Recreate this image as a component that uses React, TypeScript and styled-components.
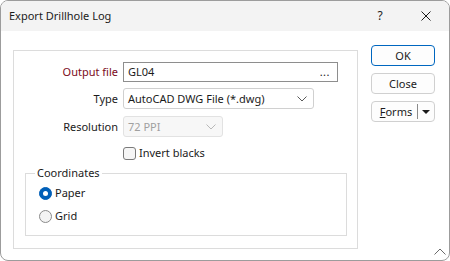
import React from 'react'
import styled, { createGlobalStyle } from 'styled-components'

const GlobalStyle = createGlobalStyle`
  html, body {
    margin: 0;
    padding: 0;
    background: #ffffff;
  }
  * {
    box-sizing: border-box;
  }
`

const Window = styled.div`
  position: relative;
  width: 450px;
  height: 261px;
  border: 1px solid #9c9c9c;
  border-radius: 8px;
  overflow: hidden;
  background: #ffffff;
  font-family: "Segoe UI", "Noto Sans", sans-serif;
  font-size: 11px;
  line-height: 16px;
  color: #1b1b1b;
`

const TitleBar = styled.div`
  height: 30px;
  background: #f3f3f3;
  display: flex;
  align-items: center;
  padding-left: 8px;
`

const Title = styled.div`
  flex: 1;
  font-size: 11px;
`

const TitleButton = styled.div`
  width: 46px;
  height: 30px;
  display: flex;
  align-items: center;
  justify-content: center;
  font-size: 12px;
`

const Body = styled.div`
  display: flex;
  align-items: flex-start;
  padding: 14px 0 0 12px;
  gap: 13px;
`

const Panel = styled.div`
  margin-top: 5px;
  width: 345px;
  height: 199px;
  border: 1px solid #dcdcdc;
  padding-top: 11px;
`

const Row = styled.div<{ $gap?: number }>`
  display: flex;
  align-items: center;
  margin-top: ${p => p.$gap ?? 0}px;
`

const Label = styled.div<{ $required?: boolean }>`
  width: 109px;
  text-align: right;
  padding-right: 5px;
  color: ${p => (p.$required ? '#7b0a1a' : '#1b1b1b')};
  white-space: nowrap;
`

const Field = styled.div<{ $width: number; $height: number; $disabled?: boolean; $dark?: boolean }>`
  width: ${p => p.$width}px;
  height: ${p => p.$height}px;
  display: flex;
  align-items: center;
  padding: 0 6px 0 4px;
  border: 1px solid ${p => (p.$dark ? '#8e8e8e' : p.$disabled ? '#e2e2e2' : '#d0d0d0')};
  border-radius: ${p => (p.$dark ? 0 : 3)}px;
  background: ${p => (p.$disabled ? '#f7f7f7' : '#ffffff')};
  color: ${p => (p.$disabled ? '#a0a0a0' : '#1b1b1b')};
`

const FieldText = styled.span`
  flex: 1;
  white-space: nowrap;
`

const Dots = styled.span`
  letter-spacing: 0.5px;
  margin-right: 1px;
`

const CheckRow = styled.label`
  display: flex;
  align-items: center;
  gap: 3px;
  margin: 8px 0 0 109px;
`

const CheckBox = styled.span`
  width: 13px;
  height: 13px;
  border: 1px solid #7a7a7a;
  border-radius: 3px;
  background: #f6f6f6;
`

const Group = styled.fieldset`
  margin: 4px 0 0 11px;
  width: 322px;
  height: 71px;
  border: 1px solid #dcdcdc;
  padding: 0 0 0 9px;
`

const Legend = styled.legend`
  padding: 0 2px;
  line-height: 16px;
`

const RadioRow = styled.label<{ $gap: number }>`
  display: flex;
  align-items: center;
  gap: 3px;
  margin: ${p => p.$gap}px 0 0 4px;
`

const Radio = styled.span<{ $checked?: boolean }>`
  width: 13px;
  height: 13px;
  border-radius: 50%;
  display: flex;
  align-items: center;
  justify-content: center;
  background: ${p => (p.$checked ? '#005fb8' : '#f3f3f3')};
  border: 1px solid ${p => (p.$checked ? '#005fb8' : '#8a8a8a')};
  &::after {
    content: '';
    width: 5px;
    height: 5px;
    border-radius: 50%;
    background: #ffffff;
    display: ${p => (p.$checked ? 'block' : 'none')};
  }
`

const Buttons = styled.div`
  display: flex;
  flex-direction: column;
  gap: 7px;
`

const Button = styled.div<{ $primary?: boolean }>`
  width: 64px;
  height: 21px;
  display: flex;
  align-items: center;
  justify-content: center;
  border: 1px solid ${p => (p.$primary ? '#0067c0' : '#d0d0d0')};
  border-radius: 4px;
  background: #fdfdfd;
`

const SplitLabel = styled.span`
  flex: 1;
  text-align: center;
  padding-left: 3px;
`

const Divider = styled.span`
  width: 1px;
  height: 15px;
  background: #8a8a8a;
`

const Arrow = styled.span`
  width: 16px;
  display: flex;
  justify-content: center;
`

const Grip = styled.div`
  position: absolute;
  right: 3px;
  bottom: 5px;
  line-height: 0;
`

const Chevron = ({ color }: { color: string }) => (
  <svg width="10" height="6" viewBox="0 0 10 6">
    <path d="M0.5 0.5 L5 5 L9.5 0.5" fill="none" stroke={color} strokeWidth="1" />
  </svg>
)

function App() {
  return (
    <>
      <GlobalStyle />
      <Window>
        <TitleBar>
          <Title>Export Drillhole Log</Title>
          <TitleButton>?</TitleButton>
          <TitleButton>
            <svg width="10" height="10" viewBox="0 0 10 10">
              <path d="M0.5 0.5 L9.5 9.5 M9.5 0.5 L0.5 9.5" stroke="#1b1b1b" strokeWidth="1" />
            </svg>
          </TitleButton>
        </TitleBar>
        <Body>
          <Panel>
            <Row>
              <Label $required>Output file</Label>
              <Field $width={215} $height={20} $dark>
                <FieldText>GL04</FieldText>
                <Dots>...</Dots>
              </Field>
            </Row>
            <Row $gap={6}>
              <Label>Type</Label>
              <Field $width={191} $height={21}>
                <FieldText>AutoCAD DWG File (*.dwg)</FieldText>
                <Chevron color="#5a5a5a" />
              </Field>
            </Row>
            <Row $gap={7}>
              <Label>Resolution</Label>
              <Field $width={100} $height={21} $disabled>
                <FieldText>72 PPI</FieldText>
                <Chevron color="#b8b8b8" />
              </Field>
            </Row>
            <CheckRow>
              <CheckBox />
              Invert blacks
            </CheckRow>
            <Group>
              <Legend>Coordinates</Legend>
              <RadioRow $gap={4}>
                <Radio $checked />
                Paper
              </RadioRow>
              <RadioRow $gap={7}>
                <Radio />
                Grid
              </RadioRow>
            </Group>
          </Panel>
          <Buttons>
            <Button $primary>OK</Button>
            <Button>Close</Button>
            <Button>
              <SplitLabel>
                <u>F</u>orms
              </SplitLabel>
              <Divider />
              <Arrow>
                <svg width="8" height="4" viewBox="0 0 8 4">
                  <path d="M0 0 L8 0 L4 4 Z" fill="#1b1b1b" />
                </svg>
              </Arrow>
            </Button>
          </Buttons>
        </Body>
        <Grip>
          <svg width="12" height="7" viewBox="0 0 12 7">
            <path d="M0.5 6.5 L6 1 L11.5 6.5" fill="none" stroke="#6a6a6a" strokeWidth="1" />
          </svg>
        </Grip>
      </Window>
    </>
  )
}

export default App
